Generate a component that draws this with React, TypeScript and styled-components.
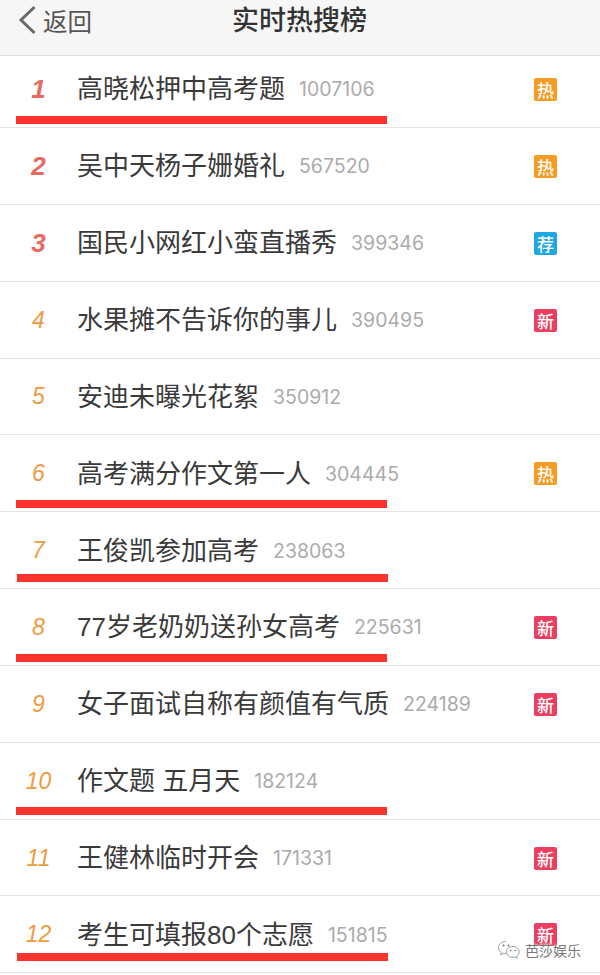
import React, { FC } from "react";
import styled, { createGlobalStyle } from "styled-components";

type Tag = "hot" | "rec" | "new";

interface IHotItem {
  rank: number;
  title: string;
  count: string;
  tag?: Tag;
  // hand-drawn red line: how far it sits above the row's usual spot
  mark?: { lift: number; shift: number };
}

const items: IHotItem[] = [
  { rank: 1, title: "高晓松押中高考题", count: "1007106", tag: "hot", mark: { lift: 0, shift: 0 } },
  { rank: 2, title: "吴中天杨子姗婚礼", count: "567520", tag: "hot" },
  { rank: 3, title: "国民小网红小蛮直播秀", count: "399346", tag: "rec" },
  { rank: 4, title: "水果摊不告诉你的事儿", count: "390495", tag: "new" },
  { rank: 5, title: "安迪未曝光花絮", count: "350912" },
  { rank: 6, title: "高考满分作文第一人", count: "304445", tag: "hot", mark: { lift: 0, shift: 0 } },
  { rank: 7, title: "王俊凯参加高考", count: "238063", mark: { lift: 3, shift: 1 } },
  { rank: 8, title: "77岁老奶奶送孙女高考", count: "225631", tag: "new", mark: { lift: 0, shift: 0 } },
  { rank: 9, title: "女子面试自称有颜值有气质", count: "224189", tag: "new" },
  { rank: 10, title: "作文题 五月天", count: "182124", mark: { lift: 1, shift: 0 } },
  { rank: 11, title: "王健林临时开会", count: "171331", tag: "new" },
  { rank: 12, title: "考生可填报80个志愿", count: "151815", tag: "new", mark: { lift: 8, shift: 1 } },
];

const tagText: Record<Tag, string> = { hot: "热", rec: "荐", new: "新" };
const tagColor: Record<Tag, string> = { hot: "#f59c25", rec: "#1fa8e0", new: "#ea3f60" };

const App: FC = () => {
  return (
    <Page>
      <GlobalStyle />
      <Header>
        <BackLink>
          <svg width="22" height="32" viewBox="0 0 22 32" fill="none">
            <path d="M19.500 3 L6 16 L19.500 29" stroke="#6a6a6a" strokeWidth="3" />
          </svg>
          <span>返回</span>
        </BackLink>
        <HeaderTitle>实时热搜榜</HeaderTitle>
      </Header>
      <List>
        {items.map((item: IHotItem) => {
          return (
            <Row key={item.rank}>
              <Rank $top={item.rank <= 3}>{item.rank}</Rank>
              <Title>{item.title}</Title>
              <Count>{item.count}</Count>
              {item.tag && <Badge $color={tagColor[item.tag]}>{tagText[item.tag]}</Badge>}
              {item.mark && <Underline $lift={item.mark.lift} $shift={item.mark.shift} />}
            </Row>
          );
        })}
      </List>
      <Watermark>
        <svg width="24" height="20" viewBox="0 0 24 20" fill="none" stroke="#9a9a9a" strokeWidth="1">
          <path d="M9 1.5C4.8 1.5 1.5 4.2 1.5 7.6c0 2 1.1 3.6 2.8 4.8L3.6 14.6l2.6-1.3c.9.3 1.8.4 2.8.4" />
          <path d="M16 6.5c-3.6 0-6.5 2.4-6.5 5.4s2.9 5.4 6.5 5.4c.8 0 1.500-.1 2.200-.3l2.100 1.200-.6-1.900c1.500-1 2.400-2.600 2.400-4.400 0-3-2.900-5.400-6.100-5.400z" />
          <circle cx="6.500" cy="5.500" r=".8" fill="#9a9a9a" />
          <circle cx="11.500" cy="5.500" r=".8" fill="#9a9a9a" />
          <circle cx="13.800" cy="10.500" r=".6" fill="#9a9a9a" />
          <circle cx="18.300" cy="10.500" r=".6" fill="#9a9a9a" />
        </svg>
        <span>芭莎娱乐</span>
      </Watermark>
    </Page>
  );
};

export default App;

const GlobalStyle = createGlobalStyle`
  html, body {
    margin: 0;
    padding: 0;
    background: #fff;
  }
`;

const Page = styled.div`
  position: relative;
  width: 600px;
  height: 975px;
  overflow: hidden;
  background: #fff;
  font-family: "Liberation Sans", "Noto Sans CJK SC", sans-serif;
`;

const Header = styled.header`
  position: relative;
  display: flex;
  align-items: center;
  justify-content: center;
  height: 56px;
  box-sizing: border-box;
  padding-bottom: 13px;
  background: #f6f6f6;
  border-bottom: 1px solid #dedede;
`;

const BackLink = styled.div`
  position: absolute;
  left: 15px;
  top: 4px;
  display: flex;
  align-items: center;
  gap: 6px;
  height: 32px;
  font-size: 24.500px;
  color: #555;
`;

const HeaderTitle = styled.h1`
  margin: 0 0 0 -1px;
  font-size: 27px;
  font-weight: 500;
  line-height: 40px;
  color: #333;
`;

const List = styled.ul`
  list-style: none;
  margin: 0;
  padding: 0;
`;

const Row = styled.li`
  position: relative;
  display: flex;
  align-items: center;
  height: 76.85px;
  box-sizing: border-box;
  padding: 1px 43px 0 0;
  border-bottom: 1px solid #e4e4e4;

  &:first-child {
    height: 72px;
    padding-top: 0;
    padding-bottom: 5px;
  }
`;

const Rank = styled.span<{ $top: boolean }>`
  flex: 0 0 77px;
  text-align: center;
  font-size: ${(p) => (p.$top ? "26px" : "23px")};
  font-style: italic;
  font-weight: ${(p) => (p.$top ? 700 : 400)};
  color: ${(p) => (p.$top ? "#e8695f" : "#ef9a3f")};
`;

const Title = styled.span`
  font-size: 26px;
  line-height: 36px;
  color: #3a3a3a;
  white-space: pre;
`;

const Count = styled.span`
  margin-left: 14px;
  font-family: "Inter", "Liberation Sans", sans-serif;
  font-size: 19.500px;
  color: #ababab;
`;

const Badge = styled.span<{ $color: string }>`
  display: flex;
  align-items: center;
  justify-content: center;
  width: 23px;
  height: 23px;
  margin-left: auto;
  border-radius: 2px;
  background: ${(p) => p.$color};
  font-size: 17px;
  font-weight: 500;
  color: #fff;
`;

const Underline = styled.div<{ $lift: number; $shift: number }>`
  position: absolute;
  left: ${(p) => 16 + p.$shift}px;
  bottom: ${(p) => 3 + p.$lift}px;
  width: 371px;
  height: 8px;
  background: #f8352c;
`;

const Watermark = styled.div`
  position: absolute;
  left: 497px;
  top: 940px;
  display: flex;
  align-items: center;
  gap: 4px;
  font-size: 14px;
  color: #777;
  text-shadow: 0 0 2px #fff, 0 0 2px #fff;
`;
